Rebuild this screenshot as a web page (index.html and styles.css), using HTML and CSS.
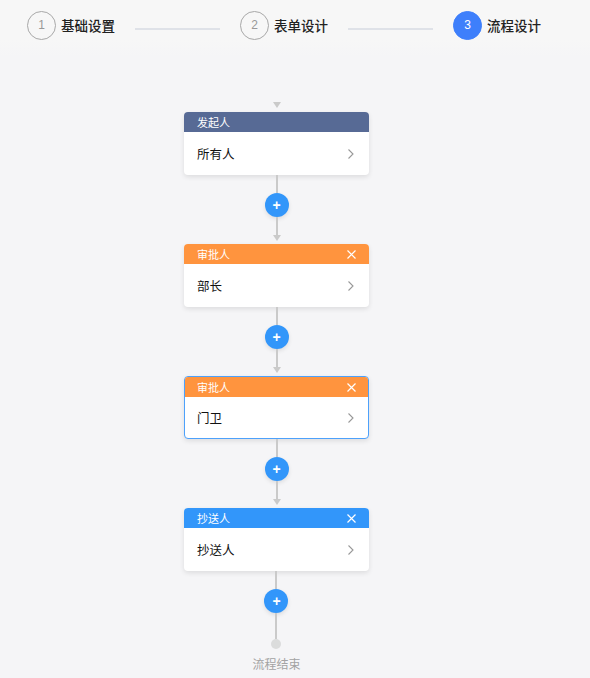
FILE: index.html
```html
<!DOCTYPE html>
<html lang="zh-CN">
<head>
    <meta charset="UTF-8">
    <meta name="viewport" content="width=device-width, initial-scale=1.0">
    <title>流程设计</title>
    <link rel="stylesheet" href="styles.css">
</head>
<body>
    <div class="steps">
        <div class="step">
            <span class="step-num">1</span>
            <span class="step-title">基础设置</span>
        </div>
        <div class="step-line"></div>
        <div class="step">
            <span class="step-num">2</span>
            <span class="step-title">表单设计</span>
        </div>
        <div class="step-line"></div>
        <div class="step active">
            <span class="step-num">3</span>
            <span class="step-title">流程设计</span>
        </div>
    </div>

    <div class="canvas">
        <div class="flow">
            <div class="arrow"></div>
            <div class="node">
                <div class="node-head starter">发起人</div>
                <div class="node-body">
                    <span>所有人</span>
                    <svg class="chevron" width="6" height="10" viewBox="0 0 6 10"><polyline points="0.5,0.5 5,5 0.5,9.5" fill="none" stroke="#999" stroke-width="1.1"/></svg>
                </div>
            </div>

            <div class="add">
                <div class="line"></div>
                <div class="plus">+</div>
                <div class="line"></div>
                <div class="arrow"></div>
            </div>

            <div class="node">
                <div class="node-head approver">
                    <span>审批人</span>
                    <svg class="close" width="9" height="9" viewBox="0 0 9 9"><path d="M0.5 0.5 L8.5 8.5 M8.5 0.5 L0.5 8.5" stroke="#fff" stroke-width="1.2"/></svg>
                </div>
                <div class="node-body">
                    <span>部长</span>
                    <svg class="chevron" width="6" height="10" viewBox="0 0 6 10"><polyline points="0.5,0.5 5,5 0.5,9.5" fill="none" stroke="#999" stroke-width="1.1"/></svg>
                </div>
            </div>

            <div class="add">
                <div class="line"></div>
                <div class="plus">+</div>
                <div class="line"></div>
                <div class="arrow"></div>
            </div>

            <div class="node active">
                <div class="node-head approver">
                    <span>审批人</span>
                    <svg class="close" width="9" height="9" viewBox="0 0 9 9"><path d="M0.5 0.5 L8.5 8.5 M8.5 0.5 L0.5 8.5" stroke="#fff" stroke-width="1.2"/></svg>
                </div>
                <div class="node-body">
                    <span>门卫</span>
                    <svg class="chevron" width="6" height="10" viewBox="0 0 6 10"><polyline points="0.5,0.5 5,5 0.5,9.5" fill="none" stroke="#999" stroke-width="1.1"/></svg>
                </div>
            </div>

            <div class="add">
                <div class="line"></div>
                <div class="plus">+</div>
                <div class="line"></div>
                <div class="arrow"></div>
            </div>

            <div class="node">
                <div class="node-head copyer">
                    <span>抄送人</span>
                    <svg class="close" width="9" height="9" viewBox="0 0 9 9"><path d="M0.5 0.5 L8.5 8.5 M8.5 0.5 L0.5 8.5" stroke="#fff" stroke-width="1.2"/></svg>
                </div>
                <div class="node-body">
                    <span>抄送人</span>
                    <svg class="chevron" width="6" height="10" viewBox="0 0 6 10"><polyline points="0.5,0.5 5,5 0.5,9.5" fill="none" stroke="#999" stroke-width="1.1"/></svg>
                </div>
            </div>

            <div class="add end">
                <div class="line"></div>
                <div class="plus">+</div>
                <div class="line long"></div>
                <div class="end-dot"></div>
                <div class="end-text">流程结束</div>
            </div>
        </div>
    </div>
</body>
</html>
```

FILE: styles.css
```css
body {
    margin: 0;
    padding: 0;
    font-family: "Noto Sans CJK SC", "Liberation Sans", sans-serif;
    background-color: #f5f5f7;
    color: #333;
}
.steps {
    display: flex;
    align-items: center;
    height: 56px;
    padding: 0 0 0 27px;
    box-sizing: border-box;
    padding-bottom: 6px;
    background: linear-gradient(#f7f7f7 0, #f7f7f7 40px, #f5f5f7 56px);
}
.step {
    display: flex;
    align-items: center;
}
.step-num {
    width: 27px;
    height: 27px;
    border: 1px solid #a8a8a8;
    border-radius: 50%;
    display: flex;
    align-items: center;
    justify-content: center;
    font-family: "Liberation Sans", sans-serif;
    font-size: 12px;
    color: #999;
}
.step-title {
    margin-left: 5px;
    font-size: 13.5px;
    font-weight: 500;
    color: #222;
}
.step.active .step-num {
    background-color: #3e7ffb;
    border-color: #3e7ffb;
    color: #fff;
}
.step-line {
    width: 85px;
    height: 2px;
    margin: 8px 20px 0 20px;
    background-color: #dfe2e8;
}
.canvas {
    padding: 46px 37px 0 0;
}
.flow {
    display: flex;
    flex-direction: column;
    align-items: center;
}
.arrow {
    width: 0;
    height: 0;
    border-left: 4px solid transparent;
    border-right: 4px solid transparent;
    border-top: 6px solid #cacaca;
    margin-bottom: 4px;
}
.node {
    width: 185px;
    height: 63px;
    box-sizing: border-box;
    display: flex;
    flex-direction: column;
    background-color: #fff;
    border-radius: 4px;
    box-shadow: 0 2px 5px rgba(0,0,0,0.1);
    overflow: hidden;
}
.node.active {
    border: 1px solid #4da1fb;
}
.node-head {
    height: 20px;
    flex-shrink: 0;
    display: flex;
    align-items: center;
    justify-content: space-between;
    padding: 0 13px;
    font-size: 11px;
    color: #fff;
}
.node.active .node-head {
    padding: 0 12px;
}
.starter {
    background-color: #576a95;
}
.approver {
    background-color: #ff943e;
}
.copyer {
    background-color: #3296fa;
}
.node-body {
    flex: 1;
    display: flex;
    align-items: center;
    justify-content: space-between;
    padding: 0 15px 0 13px;
    font-size: 12.5px;
    color: #111;
}
.node.active .node-body {
    padding: 0 14px 0 12px;
}
.add {
    display: flex;
    flex-direction: column;
    align-items: center;
}
.add .arrow {
    margin-bottom: 3px;
}
.line {
    width: 2px;
    height: 18px;
    background-color: #cacaca;
}
.line.long {
    height: 26px;
}
.plus {
    width: 24px;
    height: 24px;
    border-radius: 50%;
    background-color: #3296fa;
    box-shadow: 0 2px 4px rgba(0,0,0,0.1);
    color: #fff;
    font-family: "Liberation Sans", sans-serif;
    font-size: 14px;
    font-weight: bold;
    line-height: 24px;
    text-align: center;
}
.end-dot {
    width: 10px;
    height: 10px;
    border-radius: 50%;
    background-color: #dbdcdc;
}
.end-text {
    margin-top: 6px;
    font-size: 12px;
    color: #a3a3a3;
}
```
